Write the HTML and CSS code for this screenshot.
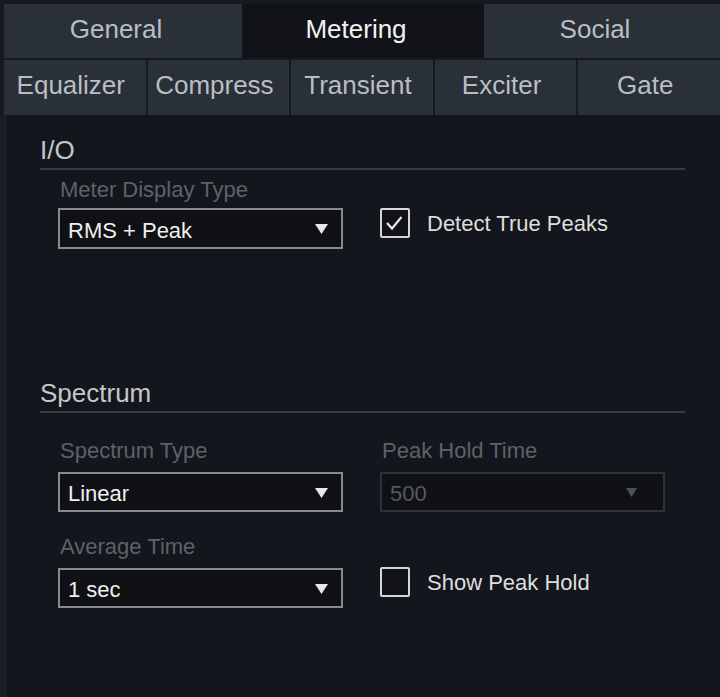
FILE: index.html
```html
<!DOCTYPE html>
<html>
<head>
<meta charset="utf-8">
<link rel="stylesheet" href="styles.css">
</head>
<body>
<div class="app">
  <div class="tabs-main">
    <div class="tab">General</div>
    <div class="tab active">Metering</div>
    <div class="tab">Social</div>
  </div>
  <div class="tabs-sub">
    <div class="tab">Equalizer</div>
    <div class="tab">Compress</div>
    <div class="tab">Transient</div>
    <div class="tab">Exciter</div>
    <div class="tab">Gate</div>
  </div>
  <div class="content">
    <div class="section io">
      <div class="heading">I/O</div>
      <div class="grid io-grid">
        <div class="field">
          <div class="label">Meter Display Type</div>
          <div class="select"><span>RMS + Peak</span><svg class="arrow" width="13" height="10" viewBox="0 0 13 10"><polygon points="0,0 13,0 6.5,10" fill="#e6e6e6"/></svg></div>
        </div>
        <div class="check-wrap">
          <div class="check">
            <div class="box"><svg width="26" height="26" viewBox="0 0 26 26"><polyline points="5,13 10,18.5 19.5,7" fill="none" stroke="#e8e8e8" stroke-width="2.2"/></svg></div>
            <span>Detect True Peaks</span>
          </div>
        </div>
      </div>
    </div>
    <div class="section spectrum">
      <div class="heading">Spectrum</div>
      <div class="grid sp-grid">
        <div class="field">
          <div class="label">Spectrum Type</div>
          <div class="select"><span>Linear</span><svg class="arrow" width="13" height="10" viewBox="0 0 13 10"><polygon points="0,0 13,0 6.5,10" fill="#e6e6e6"/></svg></div>
        </div>
        <div class="field disabled">
          <div class="label">Peak Hold Time</div>
          <div class="select"><span>500</span><svg class="arrow" width="11" height="9" viewBox="0 0 11 9"><polygon points="0,0 11,0 5.5,9" fill="#4e535a"/></svg></div>
        </div>
        <div class="field avg">
          <div class="label">Average Time</div>
          <div class="select"><span>1 sec</span><svg class="arrow" width="13" height="10" viewBox="0 0 13 10"><polygon points="0,0 13,0 6.5,10" fill="#e6e6e6"/></svg></div>
        </div>
        <div class="check-wrap avg">
          <div class="check">
            <div class="box"></div>
            <span>Show Peak Hold</span>
          </div>
        </div>
      </div>
    </div>
  </div>
</div>
</body>
</html>
```

FILE: styles.css
```css
html, body {
  margin: 0;
  padding: 0;
}
body {
  background: #161a20;
  font-family: "Liberation Sans", Arial, sans-serif;
  width: 720px;
  height: 697px;
  overflow: hidden;
}
.app {
  display: flex;
  flex-direction: column;
  height: 697px;
}
.tabs-main {
  display: grid;
  grid-template-columns: 238px 242px 1fr;
  margin-top: 4px;
  margin-left: 4px;
  height: 54px;
}
.tabs-sub {
  display: grid;
  grid-template-columns: repeat(5, 1fr);
  column-gap: 2px;
  margin-top: 2px;
  margin-left: 4px;
  height: 55px;
  background: #171b21;
}
.tab {
  background: #2a3038;
  color: #b9bec4;
  font-size: 26px;
  display: flex;
  align-items: center;
  justify-content: center;
  padding-bottom: 4px;
  box-sizing: border-box;
}
.tabs-main .tab {
  padding-right: 14px;
}
.tabs-sub .tab {
  padding-right: 8px;
}
.tabs-main .tab.active {
  background: #111318;
  color: #f2f2f2;
}
.content {
  flex: 1;
  background: #13161c;
  border-left: 7px solid #1a1e25;
  padding: 20px 35px 0 33px;
}
.heading {
  font-size: 26px;
  line-height: 30px;
  color: #c4c6c9;
  padding-bottom: 3px;
  border-bottom: 2px solid #373c44;
}
.grid {
  display: grid;
  grid-template-columns: 285px 285px;
  column-gap: 37px;
  padding-left: 18px;
}
.io-grid {
  margin-top: 7px;
}
.spectrum {
  margin-top: 129px;
}
.sp-grid {
  margin-top: 25px;
  row-gap: 22px;
}
.label {
  font-size: 22px;
  line-height: 26px;
  color: #5d6268;
  padding-left: 2px;
}
.select {
  margin-top: 5px;
  height: 41px;
  box-sizing: border-box;
  border: 2px solid #878a8f;
  background: #0f1115;
  display: flex;
  align-items: center;
  justify-content: space-between;
  padding: 4px 13px 0 8px;
  font-size: 22px;
  color: #f0f0f0;
}
.sp-grid .select {
  margin-top: 8px;
  height: 40px;
}
.disabled .select {
  border: 2px solid #2e3238;
  color: #565a60;
  padding-right: 26px;
}
.arrow {
  display: block;
  margin-top: -3px;
}
.check-wrap {
  padding-top: 31px;
}
.sp-grid .check-wrap {
  padding-top: 33px;
}
.check {
  display: flex;
  align-items: center;
  gap: 17px;
  height: 30px;
}
.box {
  width: 30px;
  height: 30px;
  box-sizing: border-box;
  border: 2px solid #d6d6d6;
  border-radius: 2px;
  background: #111318;
  display: flex;
  align-items: center;
  justify-content: center;
}
.box svg {
  display: block;
}
.check span {
  font-size: 22px;
  color: #dedede;
  padding-top: 2px;
}
```
